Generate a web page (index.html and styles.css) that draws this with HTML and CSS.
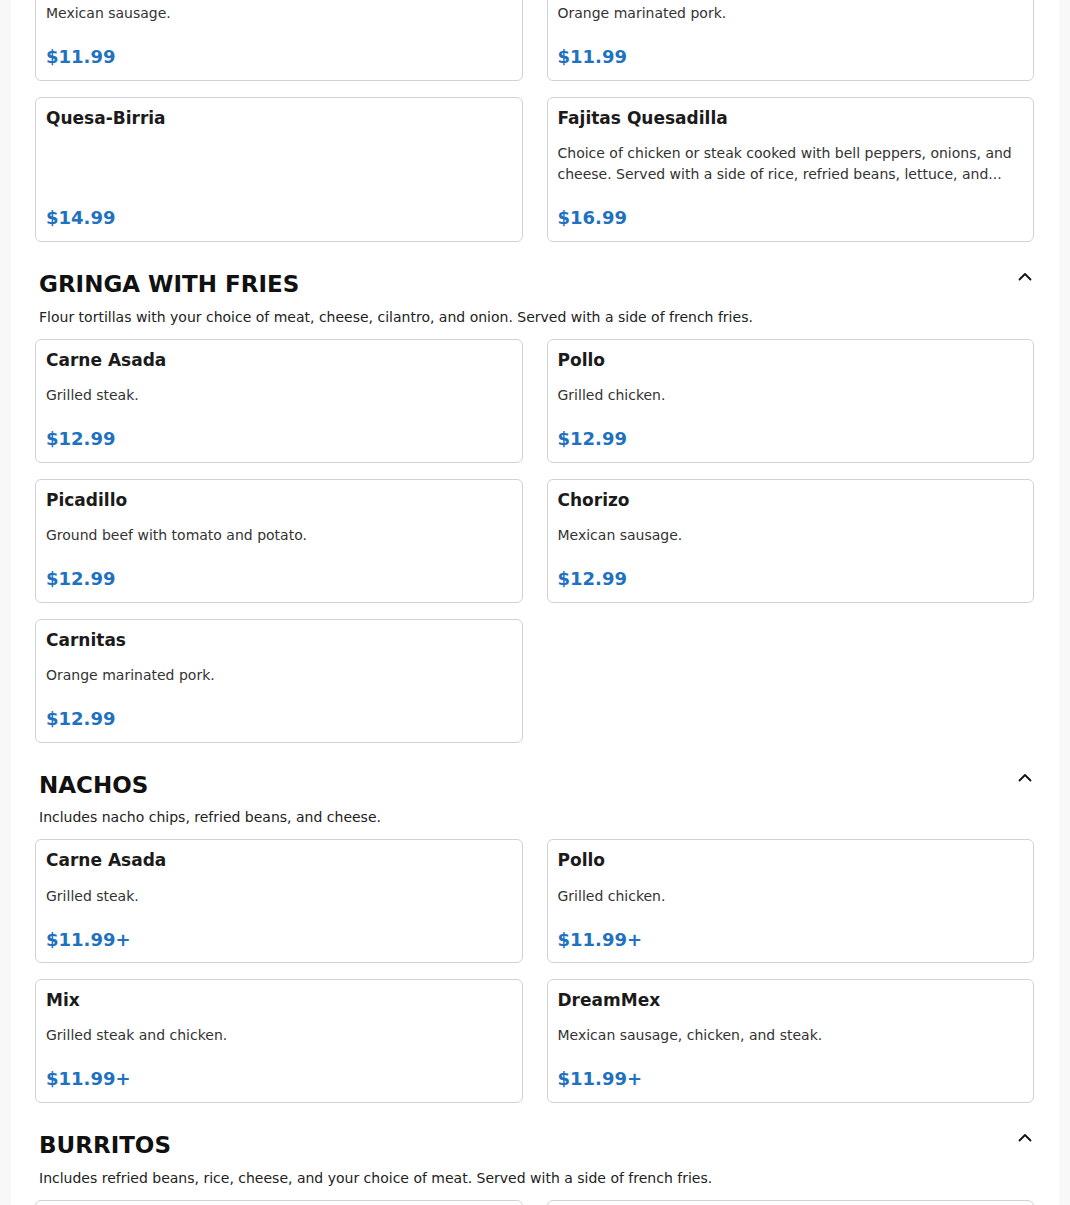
FILE: index.html
```html
<!DOCTYPE html>
<html lang="en">
<head>
<meta charset="utf-8">
<title>Menu</title>
<link rel="stylesheet" href="styles.css">
</head>
<body>
<div class="page">
  <main class="panel">
    <div class="scrolled">
      <section class="section">
        <div class="grid">
          <article class="card">
            <h3 class="card-title">Chorizo</h3>
            <p class="card-desc">Mexican sausage.</p>
            <div class="card-price">$11.99</div>
          </article>
          <article class="card">
            <h3 class="card-title">Carnitas</h3>
            <p class="card-desc">Orange marinated pork.</p>
            <div class="card-price">$11.99</div>
          </article>
          <article class="card">
            <h3 class="card-title">Quesa-Birria</h3>
            <div class="card-price">$14.99</div>
          </article>
          <article class="card">
            <h3 class="card-title">Fajitas Quesadilla</h3>
            <p class="card-desc">Choice of chicken or steak cooked with bell peppers, onions, and cheese. Served with a side of rice, refried beans, lettuce, and...</p>
            <div class="card-price">$16.99</div>
          </article>
        </div>
      </section>

      <section class="section">
        <header class="section-head">
          <h2 class="section-title">GRINGA WITH FRIES</h2>
          <svg class="chev" viewBox="0 0 16 16" width="16" height="16"><path d="M2.5 10.5 L8 5 L13.5 10.5" fill="none" stroke="#111" stroke-width="1.8" stroke-linecap="round" stroke-linejoin="round"/></svg>
        </header>
        <p class="section-desc">Flour tortillas with your choice of meat, cheese, cilantro, and onion. Served with a side of french fries.</p>
        <div class="grid">
          <article class="card">
            <h3 class="card-title">Carne Asada</h3>
            <p class="card-desc">Grilled steak.</p>
            <div class="card-price">$12.99</div>
          </article>
          <article class="card">
            <h3 class="card-title">Pollo</h3>
            <p class="card-desc">Grilled chicken.</p>
            <div class="card-price">$12.99</div>
          </article>
          <article class="card">
            <h3 class="card-title">Picadillo</h3>
            <p class="card-desc">Ground beef with tomato and potato.</p>
            <div class="card-price">$12.99</div>
          </article>
          <article class="card">
            <h3 class="card-title">Chorizo</h3>
            <p class="card-desc">Mexican sausage.</p>
            <div class="card-price">$12.99</div>
          </article>
          <article class="card">
            <h3 class="card-title">Carnitas</h3>
            <p class="card-desc">Orange marinated pork.</p>
            <div class="card-price">$12.99</div>
          </article>
        </div>
      </section>

      <section class="section">
        <header class="section-head">
          <h2 class="section-title">NACHOS</h2>
          <svg class="chev" viewBox="0 0 16 16" width="16" height="16"><path d="M2.5 10.5 L8 5 L13.5 10.5" fill="none" stroke="#111" stroke-width="1.8" stroke-linecap="round" stroke-linejoin="round"/></svg>
        </header>
        <p class="section-desc">Includes nacho chips, refried beans, and cheese.</p>
        <div class="grid">
          <article class="card">
            <h3 class="card-title">Carne Asada</h3>
            <p class="card-desc">Grilled steak.</p>
            <div class="card-price">$11.99+</div>
          </article>
          <article class="card">
            <h3 class="card-title">Pollo</h3>
            <p class="card-desc">Grilled chicken.</p>
            <div class="card-price">$11.99+</div>
          </article>
          <article class="card">
            <h3 class="card-title">Mix</h3>
            <p class="card-desc">Grilled steak and chicken.</p>
            <div class="card-price">$11.99+</div>
          </article>
          <article class="card">
            <h3 class="card-title">DreamMex</h3>
            <p class="card-desc">Mexican sausage, chicken, and steak.</p>
            <div class="card-price">$11.99+</div>
          </article>
        </div>
      </section>

      <section class="section">
        <header class="section-head">
          <h2 class="section-title">BURRITOS</h2>
          <svg class="chev" viewBox="0 0 16 16" width="16" height="16"><path d="M2.5 10.5 L8 5 L13.5 10.5" fill="none" stroke="#111" stroke-width="1.8" stroke-linecap="round" stroke-linejoin="round"/></svg>
        </header>
        <p class="section-desc">Includes refried beans, rice, cheese, and your choice of meat. Served with a side of french fries.</p>
        <div class="grid">
          <article class="card">
            <h3 class="card-title">Carne Asada</h3>
            <p class="card-desc">Grilled steak.</p>
            <div class="card-price">$12.99</div>
          </article>
          <article class="card">
            <h3 class="card-title">Pollo</h3>
            <p class="card-desc">Grilled chicken.</p>
            <div class="card-price">$12.99</div>
          </article>
        </div>
      </section>
    </div>
  </main>
</div>
</body>
</html>
```

FILE: styles.css
```css
html, body {
  margin: 0;
  padding: 0;
  background: #f8f8f8;
  font-family: "DejaVu Sans", "Noto Sans", sans-serif;
  color: #1b1b1b;
}

.page {
  padding: 0 11px;
  height: 1205px;
  overflow: hidden;
}

.panel {
  background: #ffffff;
  padding: 0 25px 0 24px;
  min-height: 1205px;
}

.scrolled {
  margin-top: -43px;
  display: flex;
  flex-direction: column;
  gap: 29px;
}

.section-head {
  display: flex;
  justify-content: space-between;
  align-items: flex-start;
  padding: 0 0 0 4px;
}

.section-title {
  margin: 0;
  font-size: 23px;
  line-height: 1.2;
  font-weight: 700;
  color: #111;
}

.chev {
  margin-top: -2px;
  margin-right: 1px;
  flex: none;
}

.section-desc {
  margin: 8px 0 11px 4px;
  font-size: 14px;
  line-height: 21px;
  color: #222;
}

.grid {
  display: grid;
  grid-template-columns: 1fr 1fr;
  column-gap: 24px;
  row-gap: 16px;
}

.card {
  border: 1px solid #d2d2d2;
  border-radius: 6px;
  padding: 10px 10px 12px;
  display: flex;
  flex-direction: column;
  background: #fff;
}

.card-title {
  margin: 0 0 15px;
  font-size: 17px;
  line-height: 1.2;
  font-weight: 700;
  color: #1b1b1b;
}

.card-desc {
  margin: 0 0 22px;
  font-size: 14px;
  line-height: 21px;
  color: #333;
}

.card-price {
  margin-top: auto;
  font-size: 18px;
  line-height: 1.2;
  font-weight: 700;
  color: #2171c1;
}
```
